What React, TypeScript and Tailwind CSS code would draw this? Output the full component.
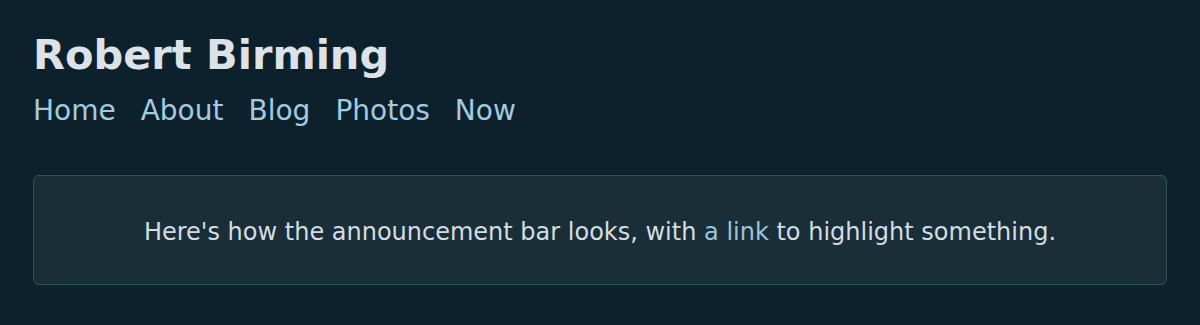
export default function App() {
  return (
    <div className="min-h-[325px] w-full bg-[#0d212d] px-[33px] pt-[30px] pb-[41px]" style={{ fontFamily: '"DejaVu Sans", Verdana, sans-serif' }}>
      <h1 className="text-[41.5px] font-bold leading-[50px] text-[#dce2e7]">Robert Birming</h1>
      <nav className="mt-[13px] flex gap-[25px] text-[28px] leading-[36px] text-[#a3cbe0]">
        <a>Home</a>
        <a>About</a>
        <a>Blog</a>
        <a>Photos</a>
        <a>Now</a>
      </nav>
      <div className="mt-[46px] flex h-[110px] items-center justify-center rounded-[6px] border border-[#34505b] bg-[#1a2e37] pt-[3px] text-[24px] text-[#d4dde2]">
        <p>
          Here's how the announcement bar looks, with <a className="text-[#9cc3d7]">a link</a> to highlight something.
        </p>
      </div>
    </div>
  );
}
